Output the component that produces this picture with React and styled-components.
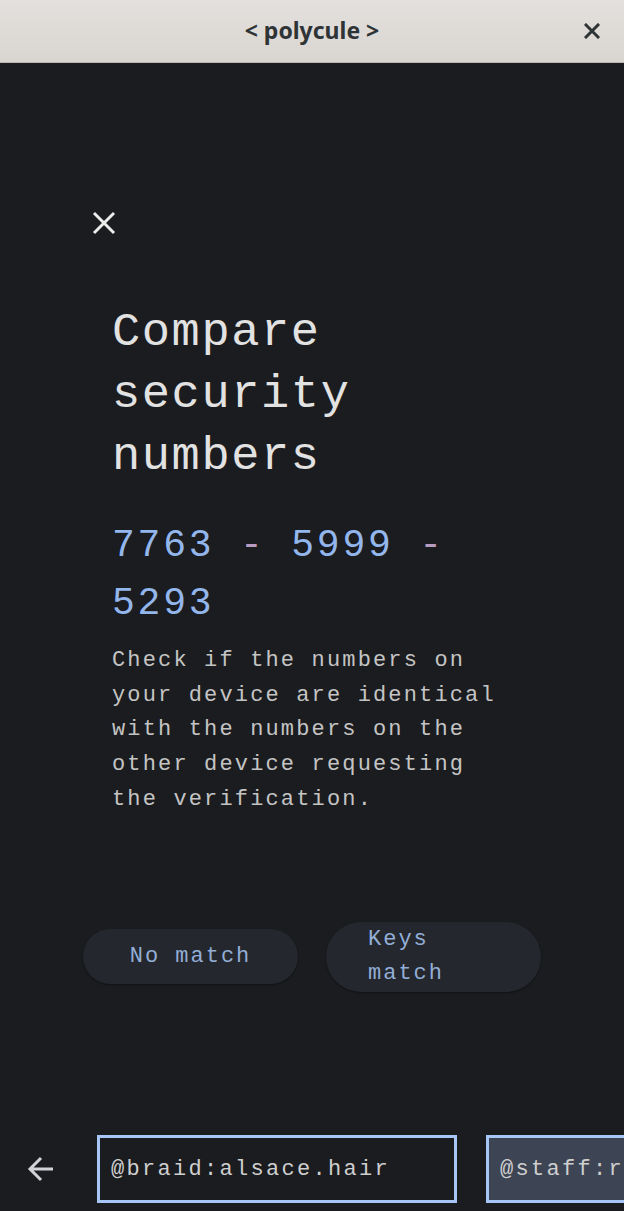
import React from 'react';
import styled, { createGlobalStyle } from "styled-components";

const GlobalStyle = createGlobalStyle`
    html, body {
        margin: 0;
        padding: 0;
        background: #1b1c1f;
    }
    #root {
        height: 100vh;
    }
`

const App = () => {
    return (
        <Window>
            <GlobalStyle />
            <HeaderBar>
                <Title>&lt; polycule &gt;</Title>
                <HeaderClose aria-label="close window">
                    <svg width="16" height="16" viewBox="0 0 16 16">
                        <path d="M2 2 L14 14 M14 2 L2 14" stroke="#2e3436" strokeWidth="3" strokeLinecap="square" />
                    </svg>
                </HeaderClose>
            </HeaderBar>
            <Main>
                <DialogClose aria-label="close">
                    <svg width="26" height="26" viewBox="0 0 26 26">
                        <path d="M3 3 L23 23 M23 3 L3 23" stroke="#ececec" strokeWidth="3" />
                    </svg>
                </DialogClose>
                <Content>
                    <Heading>Compare security numbers</Heading>
                    <Numbers>
                        7763 <Dash>-</Dash> 5999 <Dash>-</Dash> 5293
                    </Numbers>
                    <Description>
                        Check if the numbers on your device are identical with the numbers on the other device requesting the verification.
                    </Description>
                </Content>
                <Actions>
                    <PillButton tall={false}><span>No match</span></PillButton>
                    <PillButton tall={true}><span>Keys match</span></PillButton>
                </Actions>
            </Main>
            <BottomBar>
                <BackButton aria-label="back">
                    <svg width="30" height="30" viewBox="0 0 30 30">
                        <path d="M27 15 H4 M15 4 L4 15 L15 26" stroke="#d2d3d8" strokeWidth="3" fill="none" />
                    </svg>
                </BackButton>
                <ChipRow>
                    <AccountChip active={false}>@braid:alsace.hair</AccountChip>
                    <AccountChip active={true}>@staff:rainbow.party</AccountChip>
                </ChipRow>
            </BottomBar>
        </Window>
    );
};

const Window = styled.div`
    height: 100%;
    display: flex;
    flex-direction: column;
    background: #1b1c1f;
    overflow: hidden;
    font-family: "Liberation Mono", monospace;
`

const HeaderBar = styled.header`
    height: 62px;
    flex-shrink: 0;
    position: relative;
    display: flex;
    align-items: center;
    justify-content: center;
    background: linear-gradient(#e3e0dd, #d9d5d1);
    border-bottom: 1px solid #bdb6af;
`

const Title = styled.h1`
    margin: 0 0 2px;
    font-family: "Noto Sans", sans-serif;
    font-weight: 700;
    font-size: 23px;
    color: #2e3436;
`

const HeaderClose = styled.button`
    position: absolute;
    right: 24px;
    top: 23px;
    border: none;
    background: transparent;
    padding: 0;
    display: flex;
`

const Main = styled.main`
    flex: 1;
    display: flex;
    flex-direction: column;
    padding: 147px 0 0;
`

const DialogClose = styled.button`
    align-self: flex-start;
    margin-left: 91px;
    border: none;
    background: transparent;
    padding: 0;
    display: flex;
`

const Content = styled.section`
    padding: 66px 60px 0 112px;
`

const Heading = styled.h2`
    margin: 0;
    font-weight: 300;
    font-size: 47px;
    line-height: 62px;
    letter-spacing: 1.6px;
    color: #e2e2e2;
    width: 280px;
`

const Numbers = styled.p`
    margin: 29px 0 0;
    font-size: 38px;
    line-height: 58px;
    letter-spacing: 2.8px;
    color: #93b6ec;
    width: 360px;
`

const Dash = styled.span`
    color: #b79bc0;
`

const Description = styled.p`
    margin: 11px 0 0;
    font-size: 22px;
    line-height: 34.7px;
    letter-spacing: 2.15px;
    color: #c4c4c4;
    width: 400px;
`

const Actions = styled.div`
    margin-top: 104px;
    display: flex;
    justify-content: center;
    align-items: center;
    gap: 28px;
`

const PillButton = styled.button`
    width: 215px;
    height: ${props => props.tall ? "70px" : "55px"};
    border: none;
    border-radius: 35px;
    background: #24272d;
    box-shadow: 0 1px 2px rgba(0, 0, 0, 0.4);
    padding: 0 42px;
    display: flex;
    align-items: center;
    justify-content: center;
    text-align: left;
    font-family: "Liberation Mono", monospace;
    font-size: 22px;
    line-height: 34px;
    letter-spacing: 2px;
    color: #93aed6;
`

const BottomBar = styled.footer`
    height: 86px;
    flex-shrink: 0;
    display: flex;
    align-items: flex-start;
    padding-top: 10px;
    box-sizing: border-box;
`

const BackButton = styled.button`
    width: 97px;
    height: 68px;
    flex-shrink: 0;
    border: none;
    background: transparent;
    display: flex;
    align-items: center;
    justify-content: flex-start;
    padding: 0 0 0 26px;
    box-sizing: border-box;
`

const ChipRow = styled.div`
    display: flex;
    gap: 29px;
    overflow: hidden;
`

const AccountChip = styled.div`
    flex-shrink: 0;
    width: 360px;
    height: 68px;
    box-sizing: border-box;
    border: 3px solid #a6c6f6;
    background: ${props => props.active ? "#3d4453" : "#1b1c1f"};
    display: flex;
    align-items: center;
    padding-left: 11px;
    font-size: 22px;
    letter-spacing: 2.3px;
    color: #cfcfcf;
    white-space: nowrap;
    overflow: hidden;
`

export default App;
